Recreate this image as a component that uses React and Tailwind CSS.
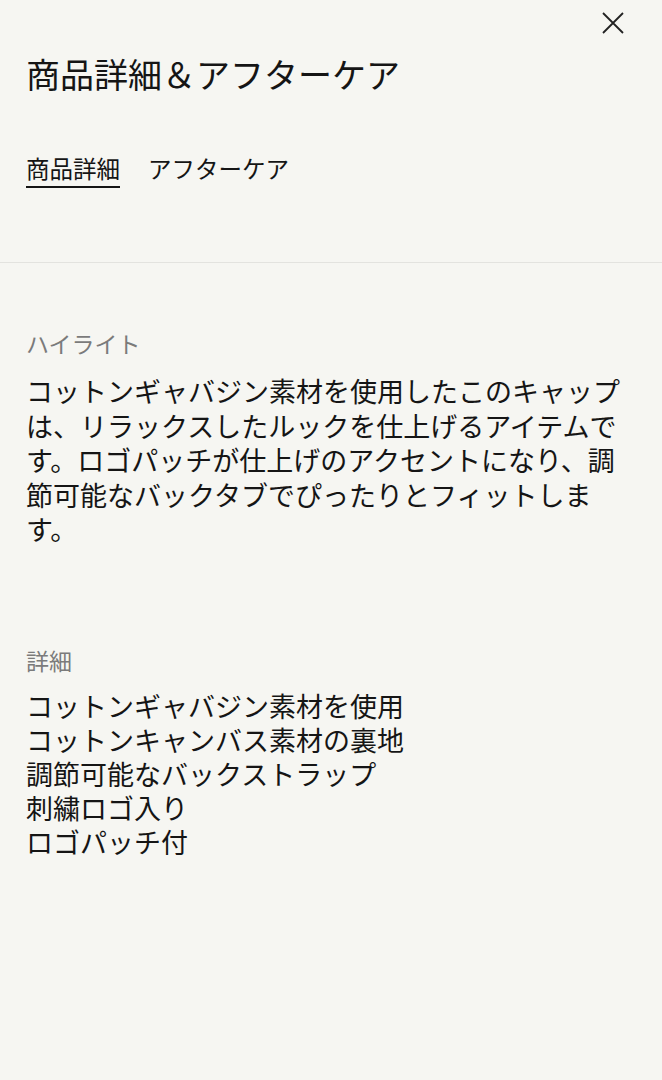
import React from "react";

const highlight =
  "コットンギャバジン素材を使用したこのキャップは、リラックスしたルックを仕上げるアイテムです。ロゴパッチが仕上げのアクセントになり、調節可能なバックタブでぴったりとフィットします。";

const details = [
  "コットンギャバジン素材を使用",
  "コットンキャンバス素材の裏地",
  "調節可能なバックストラップ",
  "刺繍ロゴ入り",
  "ロゴパッチ付",
];

function CloseIcon() {
  return (
    <svg width="24" height="24" viewBox="0 0 24 24" fill="none">
      <path d="M2 2L22 22M22 2L2 22" stroke="#222" strokeWidth="1.8" />
    </svg>
  );
}

export default function App() {
  return (
    <div
      className="min-h-screen bg-[#f6f6f2] text-[#151515]"
      style={{ fontFamily: '"Noto Sans CJK JP", "Noto Sans", sans-serif' }}
    >
      {/* header */}
      <header className="relative border-b border-[#e3e3df] px-[26px] pt-[52px] pb-[74px]">
        <button className="absolute right-[37px] top-[11px]" aria-label="close">
          <CloseIcon />
        </button>
        <h1 className="text-[34px] leading-[44px] font-normal">
          商品詳細＆アフターケア
        </h1>
        <nav className="mt-[56px] flex gap-[28px] text-[23.5px] leading-[32px]">
          <span className="border-b-2 border-[#151515] pb-[2px]">商品詳細</span>
          <span className="pb-[4px]">アフターケア</span>
        </nav>
      </header>

      {/* body */}
      <main className="px-[26px] pt-[64px]">
        <section>
          <h2 className="text-[23px] leading-[32px] text-[#7b7b7b]">ハイライト</h2>
          <p className="mt-[15px] text-[27px] leading-[34.5px]">{highlight}</p>
        </section>

        <section className="mt-[97px]">
          <h2 className="text-[23px] leading-[32px] text-[#7b7b7b]">詳細</h2>
          <ul className="mt-[13px] text-[27px] leading-[34px]">
            {details.map((d) => (
              <li key={d}>{d}</li>
            ))}
          </ul>
        </section>
      </main>
    </div>
  );
}
